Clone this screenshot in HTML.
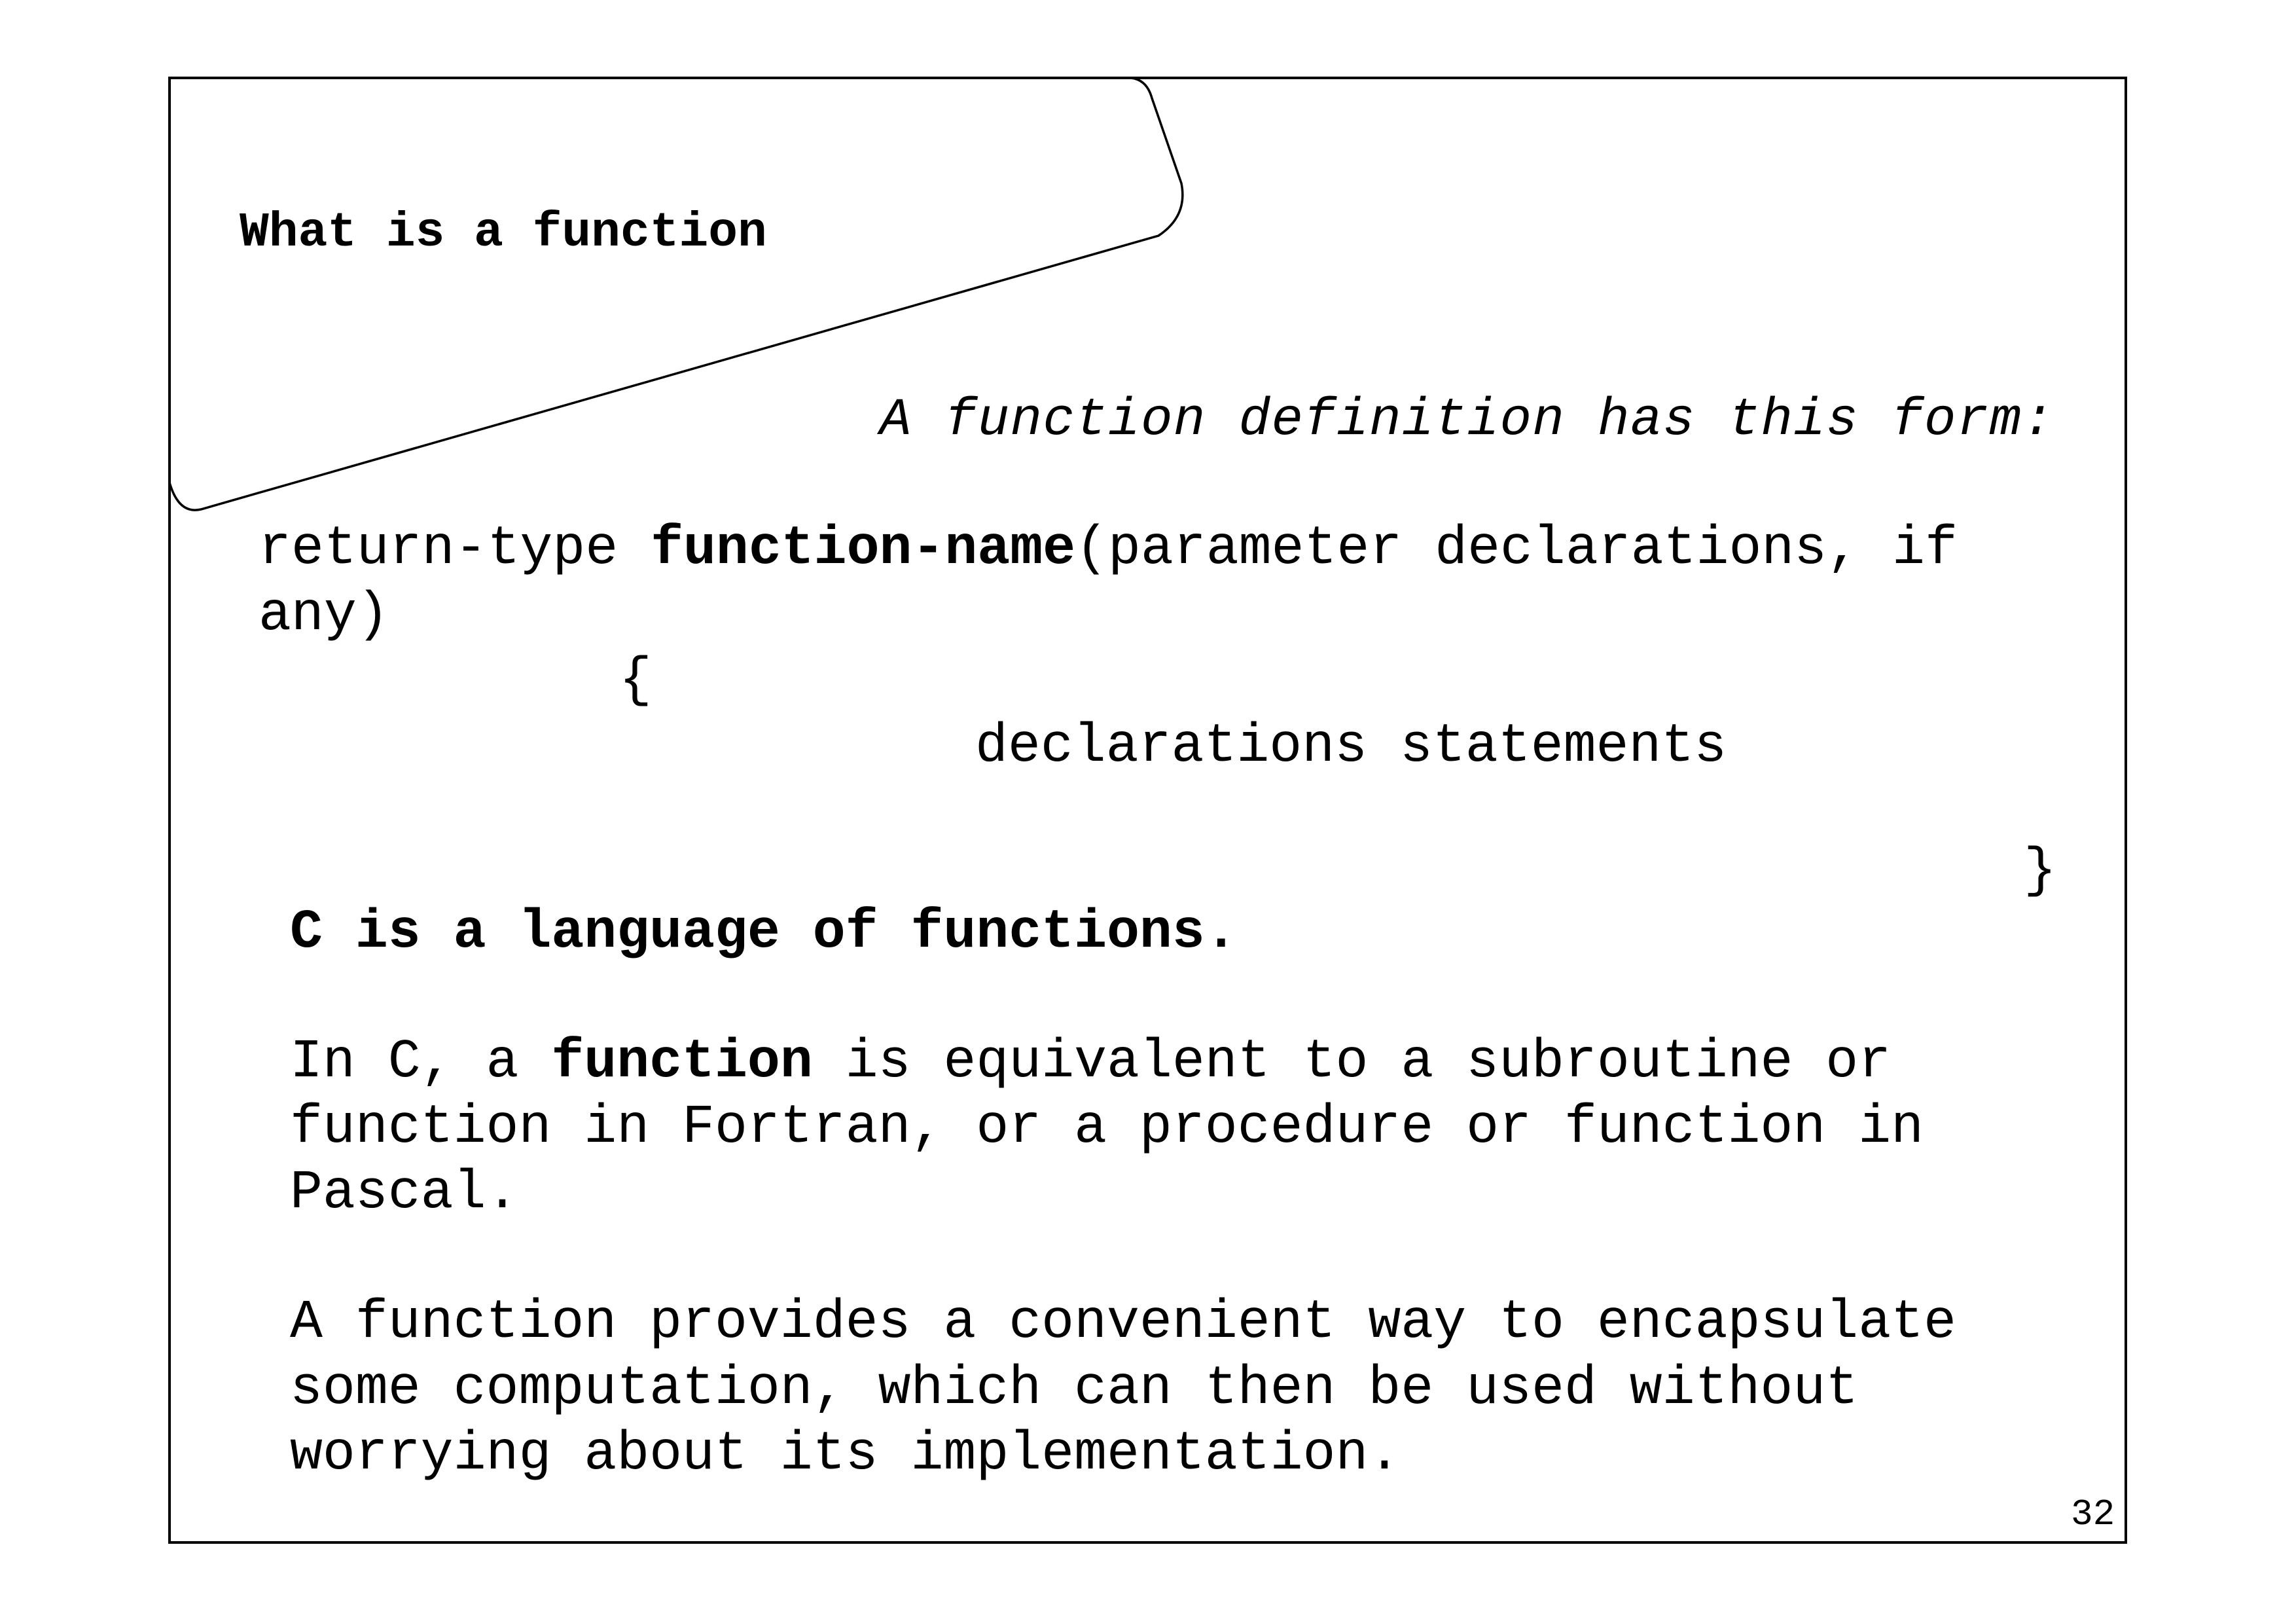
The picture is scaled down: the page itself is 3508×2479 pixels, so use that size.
<!DOCTYPE html>
<html><head><meta charset="utf-8"><style>
html,body{margin:0;padding:0;background:#fff;}
svg{display:block;}
text{font-family:"Liberation Mono","Courier New",monospace;fill:#000;white-space:pre;}
</style></head><body>
<svg width="3508" height="2479" viewBox="0 0 3508 2479" xmlns="http://www.w3.org/2000/svg" xml:space="preserve">
<rect x="0" y="0" width="3508" height="2479" fill="#fff"/>
<rect x="259" y="119" width="2989" height="2237" fill="none" stroke="#000" stroke-width="4"/>
<path d="M1727,119 Q1752,121 1760,150 L1805,280 Q1815,330 1770,360 L307,778 Q273,786 259,737" fill="none" stroke="#000" stroke-width="3.5"/>
<text x="366" y="375" font-size="74.6" font-weight="bold">What is a function</text>
<text x="1344" y="663" font-size="80.8" font-style="italic" textLength="1794" lengthAdjust="spacing">A function definition has this form:</text>
<text x="395" y="860" font-size="83.2">return-type <tspan font-weight="bold">function-name</tspan>(parameter declarations, if</text>
<text x="395" y="961" font-size="83.2">any)</text>
<text x="946" y="1061" font-size="83.2">{</text>
<text x="1490" y="1162" font-size="83.2">declarations statements</text>
<text x="3092" y="1352" font-size="83.2">}</text>
<text x="443" y="1446" font-size="83.2" font-weight="bold">C is a language of functions.</text>
<text x="443" y="1644" font-size="83.2">In C, a <tspan font-weight="bold">function</tspan> is equivalent to a subroutine or</text>
<text x="443" y="1744" font-size="83.2">function in Fortran, or a procedure or function in</text>
<text x="443" y="1844" font-size="83.2">Pascal.</text>
<text x="443" y="2042" font-size="83.2">A function provides a convenient way to encapsulate</text>
<text x="443" y="2143" font-size="83.2">some computation, which can then be used without</text>
<text x="443" y="2243" font-size="83.2">worrying about its implementation.</text>
<text x="3164" y="2328" font-size="56">32</text>
</svg>
</body></html>
